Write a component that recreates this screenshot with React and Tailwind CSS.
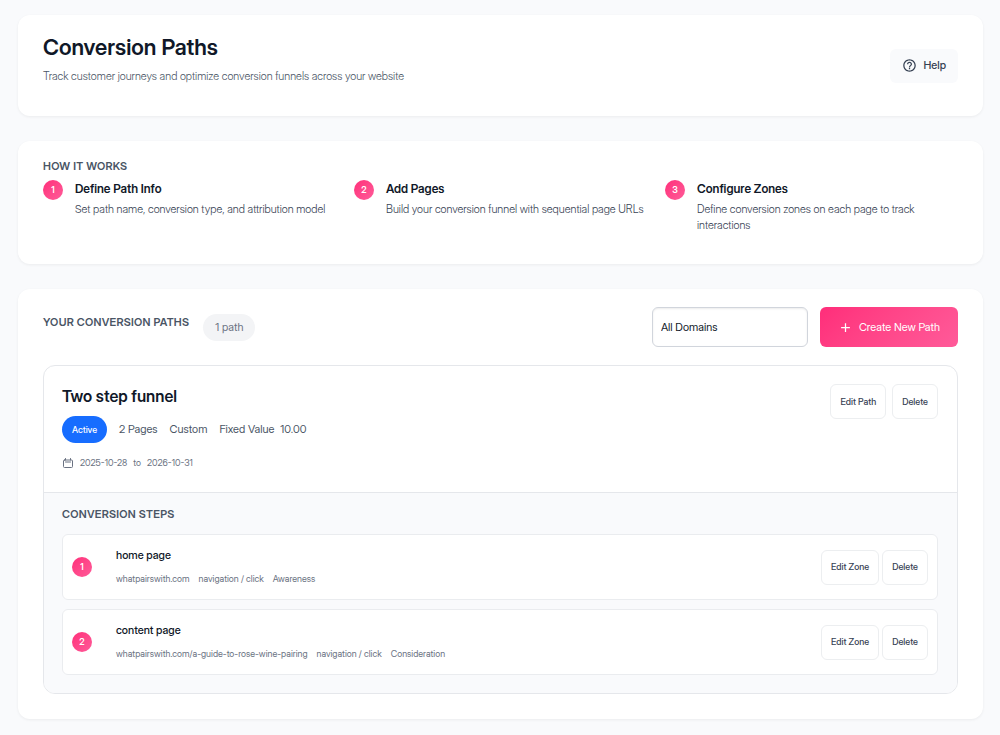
import { MdHelpOutline } from 'react-icons/md';
import { RiAddLine } from 'react-icons/ri';

const guideSteps = [
  {
    title: 'Define Path Info',
    text: 'Set path name, conversion type, and attribution model'
  },
  {
    title: 'Add Pages',
    text: 'Build your conversion funnel with sequential page URLs'
  },
  {
    title: 'Configure Zones',
    text: 'Define conversion zones on each page to track interactions'
  }
];

const conversionSteps = [
  {
    name: 'home page',
    details: ['whatpairswith.com', 'navigation / click', 'Awareness']
  },
  {
    name: 'content page',
    details: ['whatpairswith.com/a-guide-to-rose-wine-pairing', 'navigation / click', 'Consideration']
  }
];

const CalendarIcon = () => (
  <svg
    className="size-3"
    viewBox="0 0 24 24"
    fill="none"
    stroke="currentColor"
    strokeWidth="2"
    strokeLinecap="round"
    strokeLinejoin="round"
    aria-hidden="true"
  >
    <rect x="3" y="6" width="18" height="15" rx="2" />
    <path d="M7 3v3M17 3v3M7 10h10" />
  </svg>
);

const Card = ({ className, children }) => (
  <section className={`bg-white rounded-xl px-[25px] shadow-[0_1px_3px_rgba(0,0,0,0.06)] ${className}`}>
    {children}
  </section>
);

const SectionTitle = ({ children }) => (
  <h2 className="text-[11px] leading-4 font-semibold tracking-wide uppercase text-gray-600">{children}</h2>
);

const StepNumber = ({ children }) => (
  <span className="flex size-5 shrink-0 items-center justify-center rounded-full bg-linear-135 from-[#ff2d7a] to-[#ff5a99] text-[9px] font-semibold text-white">
    {children}
  </span>
);

const SmallButton = ({ children }) => (
  <button
    type="button"
    className="h-[35px] rounded-md border border-[#eceef0] bg-white px-[9px] text-[9px] font-medium text-gray-700"
  >
    {children}
  </button>
);

const App = () => {
  return (
    <main className="flex min-h-screen flex-col gap-[25px] bg-[#f9fafc] pr-[17px] pl-[18px] pt-[15px] pb-4 font-['Inter_Display','Inter',sans-serif] [font-variation-settings:'opsz'_32]">
      <Card className="flex items-center justify-between pt-4 pb-4">
        <div className="pb-4">
          <h1 className="text-[22px] leading-8 font-semibold text-gray-900">Conversion Paths</h1>
          <p className="mt-[5px] text-[11px] leading-4 font-light text-gray-600">
            Track customer journeys and optimize conversion funnels across your website
          </p>
        </div>
        <button
          type="button"
          className="flex h-[34px] items-center gap-[6px] rounded-md bg-[#f9fafc] px-3 text-[11px] font-medium text-gray-700"
        >
          <MdHelpOutline size={15} />
          Help
        </button>
      </Card>

      <Card className="pt-[17px] pb-[31px]">
        <SectionTitle>How it works</SectionTitle>
        <ol className="mt-[6px] grid grid-cols-3 gap-[18px]">
          {guideSteps.map((step, index) => (
            <li key={step.title} className="flex gap-3">
              <StepNumber>{index + 1}</StepNumber>
              <div>
                <h3 className="text-xs leading-[18px] font-semibold text-gray-900">{step.title}</h3>
                <p className="mt-[3px] text-[11px] leading-4 font-light text-gray-700">{step.text}</p>
              </div>
            </li>
          ))}
        </ol>
      </Card>

      <Card className="pt-[18px] pb-[25px]">
        <div className="flex flex-wrap items-center justify-between gap-3">
          <div className="flex gap-[14px]">
            <SectionTitle>Your Conversion Paths</SectionTitle>
            <span className="flex h-[27px] items-center rounded-full bg-gray-100 px-3 text-[11px] text-gray-500">
              1 path
            </span>
          </div>
          <div className="flex gap-3">
            <select
              aria-label="Domain"
              className="h-10 w-[156px] appearance-none rounded-md border border-gray-300 bg-white px-2 text-[11px] text-gray-900 shadow-[inset_0_1px_2px_rgba(0,0,0,0.08)]"
            >
              <option>All Domains</option>
            </select>
            <button
              type="button"
              className="flex h-10 items-center gap-[6px] rounded-md bg-linear-135 from-[#ff2d7a] to-[#ff5a99] px-[18px] text-[11px] text-white"
            >
              <RiAddLine size={15} />
              Create New Path
            </button>
          </div>
        </div>

        <article className="mt-[18px] overflow-hidden rounded-xl border border-gray-200">
          <div className="flex items-start justify-between pt-[18px] pr-[19px] pb-[21px] pl-[18px]">
            <div>
              <h3 className="text-base leading-6 font-semibold text-gray-900">Two step funnel</h3>
              <div className="mt-2 flex items-center gap-3 text-[11px] text-gray-600">
                <span className="flex h-[27px] items-center rounded-full bg-[#176dff] px-[10px] text-[9px] font-medium text-white">
                  Active
                </span>
                <span>2 Pages</span>
                <span>Custom</span>
                <span className="flex gap-[6px]">
                  <span>Fixed Value</span>
                  <span>10.00</span>
                </span>
              </div>
              <div className="mt-3 flex items-center gap-[6px] text-[9px] leading-4 text-gray-500">
                <CalendarIcon />
                <time>2025-10-28</time>
                <span>to</span>
                <time>2026-10-31</time>
              </div>
            </div>
            <div className="flex gap-[6px]">
              <SmallButton>Edit Path</SmallButton>
              <SmallButton>Delete</SmallButton>
            </div>
          </div>

          <div className="border-t border-gray-200 bg-[#f9fafc] pt-[13px] pr-[19px] pb-[18px] pl-[18px]">
            <SectionTitle>Conversion Steps</SectionTitle>
            <ol className="mt-3 flex flex-col gap-[9px]">
              {conversionSteps.map((step, index) => (
                <li
                  key={step.name}
                  className="flex h-[66px] items-center rounded-md border border-[#eaecef] bg-white px-[9px]"
                >
                  <StepNumber>{index + 1}</StepNumber>
                  <div className="ml-6 flex-1">
                    <h4 className="text-[11px] leading-4 font-medium text-gray-900">{step.name}</h4>
                    <div className="mt-2 flex gap-[9px] text-[9px] leading-4 text-gray-500">
                      {step.details.map((detail) => (
                        <span key={detail}>{detail}</span>
                      ))}
                    </div>
                  </div>
                  <div className="flex gap-[3px]">
                    <SmallButton>Edit Zone</SmallButton>
                    <SmallButton>Delete</SmallButton>
                  </div>
                </li>
              ))}
            </ol>
          </div>
        </article>
      </Card>
    </main>
  );
};

export default App;
